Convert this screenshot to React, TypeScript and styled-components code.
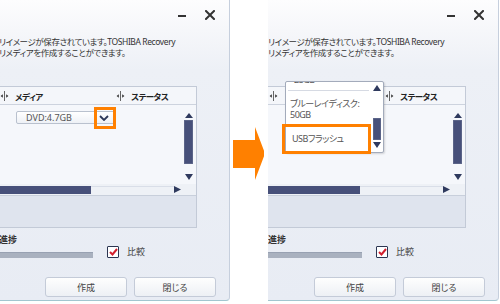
import React from 'react';
import styled, { createGlobalStyle } from 'styled-components';

const Global = createGlobalStyle`
  html, body { margin: 0; padding: 0; background: #fff; }
  body {
    width: 500px; height: 304px; overflow: hidden;
    font-family: "Noto Sans", "Noto Sans CJK JP", sans-serif;
    font-feature-settings: "palt" 1;
  }
`;

const Stage = styled.div`
  display: flex;
  width: 500px;
  height: 304px;
  background: #fff;
`;

const Panel = styled.div<{ $w: number }>`
  position: relative;
  flex: none;
  width: ${p => p.$w}px;
  height: 301px;
  box-sizing: border-box;
  overflow: hidden;
  display: flex;
  justify-content: flex-end;
  background: linear-gradient(#fdfdfe 0px, #f6f7fa 30px, #edf0f6 70px, #e8ecf4 100%);
  border-right: 1px solid #c6cfdd;
  border-bottom: 1px solid #a2c6d0;
  border-bottom-right-radius: 4px;
`;

const Window = styled.div`
  flex: none;
  width: 239px;
  display: flex;
  flex-direction: column;
  color: #333;
`;

const TitleBar = styled.div`
  height: 30px;
  display: flex;
  align-items: center;
  justify-content: flex-end;
  gap: 19px;
  padding-right: 14px;
`;

const Minimize = styled.div`
  width: 8px;
  height: 2px;
  background: #333;
  margin-top: 2px;
`;

const Message = styled.div`
  margin-top: 6px;
  padding-left: 9px;
  font-size: 8.5px;
  line-height: 11px;
  white-space: nowrap;
  color: #333;
  letter-spacing: -0.4px;
`;

const Table = styled.div`
  margin-top: 28px;
  width: 207px;
  height: 142px;
  box-sizing: border-box;
  border: 1px solid #c3cad7;
  display: flex;
  flex-direction: column;
`;

const Header = styled.div`
  height: 17px;
  flex: none;
  border-bottom: 1px solid #cdd3de;
  background: #f4f6fa;
  display: flex;
  align-items: center;
  font-size: 8.5px;
  letter-spacing: -0.5px;
  font-weight: bold;
  color: #222;
`;

const HeadCell = styled.div<{ $w?: number; $pl?: number }>`
  display: flex;
  align-items: center;
  gap: 6px;
  width: ${p => (p.$w ? `${p.$w}px` : 'auto')};
  padding-left: ${p => p.$pl ?? 0}px;
  flex: none;
`;

const Body = styled.div`
  position: relative;
  height: 79px;
  flex: none;
  display: flex;
  background: #f5f7fb;
`;

const BodyMain = styled.div`
  flex: 1;
  padding: 6px 0 0 25px;
`;

const VScroll = styled.div`
  width: 9px;
  margin-right: 3px;
  display: flex;
  flex-direction: column;
  align-items: center;
  padding-top: 8px;
`;

const Thumb = styled.div<{ $h: number; $mt: number }>`
  width: 100%;
  height: ${p => p.$h}px;
  margin-top: ${p => p.$mt}px;
  background: #47507a;
  border-radius: 1px;
  box-shadow: inset 0 0 0 1px #5b6488;
`;

const ArrowSlot = styled.div<{ $mt: number }>`
  margin-top: ${p => p.$mt}px;
  line-height: 0;
`;

const HScroll = styled.div`
  height: 11px;
  flex: none;
  border-bottom: 1px solid #c8cfdb;
  background: #eef1f6;
  display: flex;
  align-items: center;
`;

const HThumb = styled.div`
  width: 100px;
  height: 8px;
  background: #47507a;
  margin-top: 1px;
`;

const HTrack = styled.div`
  flex: none;
  width: 83px;
  height: 8px;
  margin-top: 1px;
  border-top: 1px solid #d9dee8;
  box-sizing: border-box;
`;

const Footer = styled.div`
  flex: 1;
  background: #dfe4ee;
`;

const Combo = styled.div`
  position: relative;
  width: 99px;
  height: 13px;
  box-sizing: border-box;
  border: 1px solid #b9c1ce;
  border-radius: 2px;
  background: linear-gradient(#ffffff, #eef1f6);
  display: flex;
  align-items: center;
  justify-content: space-between;
  padding: 0 5px 0 9px;
  font-size: 9px;
  color: #555;
`;

const Highlight = styled.div<{ $l: number; $t: number; $w: number; $h: number }>`
  position: absolute;
  left: ${p => p.$l}px;
  top: ${p => p.$t}px;
  width: ${p => p.$w}px;
  height: ${p => p.$h}px;
  box-sizing: border-box;
  border: 3px solid #ff8000;
  z-index: 3;
`;

const Popup = styled.div`
  position: absolute;
  left: -1px;
  top: -31px;
  width: 99px;
  height: 72px;
  box-sizing: border-box;
  border: 1px solid #a3abbb;
  border-radius: 2px;
  background: #fff;
  display: flex;
  z-index: 2;
  box-shadow: 1px 1px 2px rgba(0, 0, 0, 0.15);
`;

const PopList = styled.div`
  flex: 1;
  overflow: hidden;
  font-size: 9px;
  line-height: 11px;
  color: #555;
  letter-spacing: -0.5px;
`;

const PopItem = styled.div<{ $mt: number; $pl: number }>`
  margin-top: ${p => p.$mt}px;
  padding-left: ${p => p.$pl}px;
  white-space: nowrap;
`;

const PopSep = styled.div`
  margin: 5px 0 0 2px;
  height: 1px;
  width: 81px;
  background: #d6dae3;
`;

const PopScroll = styled.div`
  width: 8px;
  margin-right: 2px;
  display: flex;
  flex-direction: column;
  align-items: center;
  padding-top: 3px;
`;

const Label = styled.div`
  margin-top: 6px;
  padding-left: 9px;
  font-size: 9px;
  line-height: 12px;
  font-weight: bold;
  color: #333;
`;

const ProgressRow = styled.div`
  display: flex;
  align-items: center;
  height: 13px;
  margin-top: -1px;
`;

const Bar = styled.div`
  width: 103px;
  height: 6px;
  align-self: flex-end;
  background: #a9b1bf;
  border-top: 1px solid #98a1b2;
  box-sizing: border-box;
`;

const Check = styled.div`
  margin-left: 14px;
  width: 12px;
  height: 12px;
  box-sizing: border-box;
  border: 1.5px solid #2c3652;
  border-radius: 1px;
  background: #fff;
  display: flex;
  align-items: center;
  justify-content: center;
`;

const CheckText = styled.span`
  margin-left: 8px;
  font-size: 9px;
  color: #444;
`;

const Buttons = styled.div`
  margin-top: 19px;
  display: flex;
  justify-content: flex-end;
  gap: 7px;
  padding-right: 13px;
`;

const Button = styled.div`
  width: 82px;
  height: 20px;
  box-sizing: border-box;
  border: 1px solid #c4cbd8;
  border-radius: 3px;
  background: linear-gradient(#fefefe, #edf0f5);
  display: flex;
  align-items: center;
  justify-content: center;
  font-size: 9px;
  color: #444;
`;

const ArrowCol = styled.div`
  flex: none;
  width: 38px;
  display: flex;
  align-items: flex-start;
  padding-top: 127px;
  box-sizing: border-box;
`;

const Close = () => (
  <svg width="10" height="10" viewBox="0 0 10 10">
    <path d="M1 1 L9 9 M9 1 L1 9" stroke="#333" strokeWidth="2" strokeLinecap="square" />
  </svg>
);

const Sep = () => (
  <svg width="9" height="10" viewBox="0 0 9 10">
    <rect x="4" y="0" width="1" height="10" fill="#666" />
    <path d="M2.8 3.3 L0.6 5 L2.8 6.7Z" fill="#333" />
    <path d="M6.2 3.3 L8.4 5 L6.2 6.7Z" fill="#333" />
  </svg>
);

const Tri = ({ dir, w = 8, h = 5 }: { dir: 'up' | 'down' | 'right'; w?: number; h?: number }) => {
  const d =
    dir === 'up'
      ? `M0 ${h} L${w / 2} 0 L${w} ${h}Z`
      : dir === 'down'
      ? `M0 0 L${w / 2} ${h} L${w} 0Z`
      : `M0 0 L${w} ${h / 2} L0 ${h}Z`;
  return (
    <svg width={w} height={h} viewBox={`0 0 ${w} ${h}`} style={{ display: 'block', flex: 'none' }}>
      <path d={d} fill="#2f3a5e" />
    </svg>
  );
};

const Chevron = () => (
  <svg width="10" height="6" viewBox="0 0 10 6">
    <path d="M1 1 L5 5 L9 1" stroke="#2c3758" strokeWidth="1.8" fill="none" />
  </svg>
);

const CheckMark = () => (
  <svg width="9" height="8" viewBox="0 0 9 8">
    <path d="M1 4 L3.5 6.5 L8 1" stroke="#d2202e" strokeWidth="2" fill="none" />
  </svg>
);

const Dialog = ({ open }: { open: boolean }) => (
  <Window>
    <TitleBar>
      <Minimize />
      <Close />
    </TitleBar>
    <Message>
      <div>リイメージが保存されています。TOSHIBA Recovery</div>
      <div>リメディアを作成することができます。</div>
    </Message>
    <Table>
      <Header>
        <HeadCell $w={116} $pl={9}>
          <Sep />
          {!open && <span>メディア</span>}
        </HeadCell>
        <HeadCell>
          <Sep />
          <span>ステータス</span>
        </HeadCell>
      </Header>
      <Body>
        <BodyMain>
          <Combo>
            {!open && <span>DVD:4.7GB</span>}
            <Chevron />
            {!open && <Highlight $l={77} $t={-5} $w={22} $h={22} />}
            {open && (
              <>
                <Popup>
                  <PopList>
                    <PopItem $mt={-8} $pl={8}>25GB</PopItem>
                    <PopSep />
                    <PopItem $mt={7} $pl={4}>
                      ブルーレイディスク:
                      <br />
                      50GB
                    </PopItem>
                    <PopItem $mt={13} $pl={6}>USBフラッシュ</PopItem>
                  </PopList>
                  <PopScroll>
                    <Tri dir="up" w={8} h={6} />
                    <Thumb $h={22} $mt={27} />
                    <ArrowSlot $mt={2}>
                      <Tri dir="down" w={8} h={6} />
                    </ArrowSlot>
                  </PopScroll>
                </Popup>
                <Highlight $l={-4} $t={12} $w={89} $h={30} />
              </>
            )}
          </Combo>
        </BodyMain>
        <VScroll>
          <Tri dir="up" w={8} h={5} />
          <Thumb $h={44} $mt={2} />
          <ArrowSlot $mt={10}>
            <Tri dir="down" w={8} h={6} />
          </ArrowSlot>
        </VScroll>
      </Body>
      <HScroll>
        <HThumb />
        <HTrack />
        <Tri dir="right" w={7} h={7} />
      </HScroll>
      <Footer />
    </Table>
    <Label>進捗</Label>
    <ProgressRow>
      <Bar />
      <Check>
        <CheckMark />
      </Check>
      <CheckText>比較</CheckText>
    </ProgressRow>
    <Buttons>
      <Button>作成</Button>
      <Button>閉じる</Button>
    </Buttons>
  </Window>
);

export default function App() {
  return (
    <>
      <Global />
      <Stage>
        <Panel $w={230}>
          <Dialog open={false} />
        </Panel>
        <ArrowCol>
          <svg width="34" height="54" viewBox="0 0 34 54">
            <path d="M3 13 L25 13 L25 0 L35 26.5 L25 53 L25 41 L3 41 Z" fill="#ff8000" />
          </svg>
        </ArrowCol>
        <Panel $w={231}>
          <Dialog open={true} />
        </Panel>
      </Stage>
    </>
  );
}
